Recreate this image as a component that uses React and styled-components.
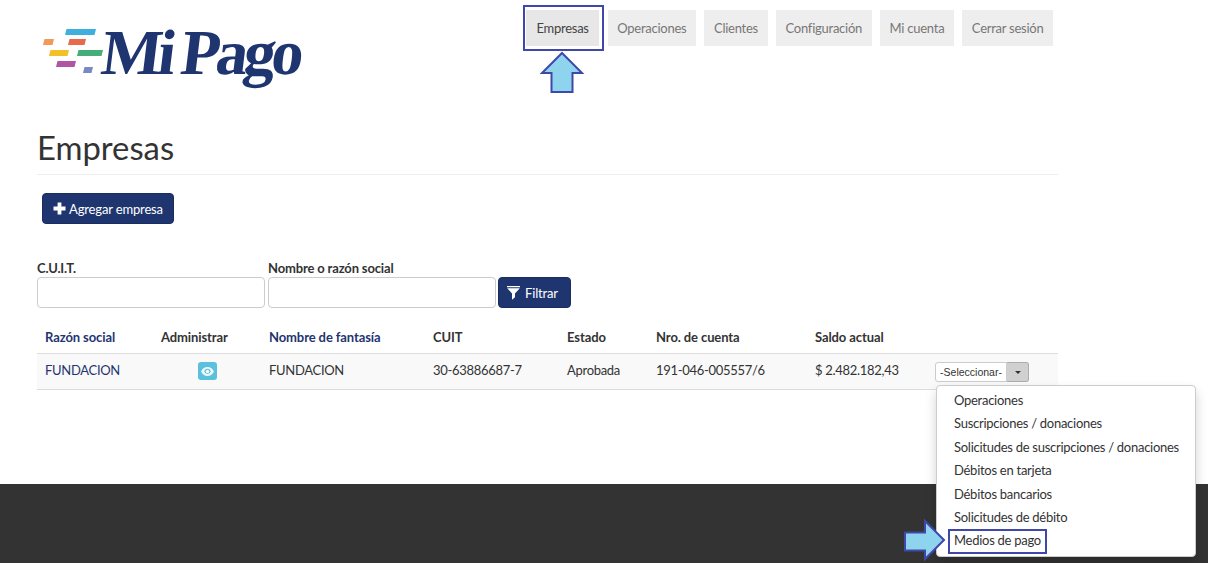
import React from "react";
import styled, { createGlobalStyle } from "styled-components";

const GlobalStyle = createGlobalStyle`
  html, body {
    margin: 0;
    padding: 0;
    background: #fff;
    overflow: hidden;
  }
  body {
    font-family: Lato, "Open Sans", sans-serif;
    font-size: 13px;
    color: #333;
  }
  * {
    box-sizing: border-box;
  }
`;

const Page = styled.div`
  position: relative;
  width: 1208px;
  height: 563px;
  overflow: hidden;
  display: flex;
  flex-direction: column;
`;

const Main = styled.div`
  height: 484px;
  padding: 0 150px 0 37px;
`;

const Header = styled.header`
  height: 105px;
  display: flex;
  justify-content: space-between;
  align-items: flex-start;
`;

const LogoWrap = styled.div`
  display: flex;
  align-items: flex-start;
  margin: 15px 0 0 5px;
  color: #1f3570;
`;

const LogoBars = styled.svg`
  width: 62px;
  height: 50px;
  margin-top: 12px;
  flex: none;
`;

const LogoText = styled.span`
  display: inline-block;
  font-family: "Liberation Serif", serif;
  font-weight: 700;
  font-size: 64px;
  line-height: 72px;
  letter-spacing: -4.2px;
  word-spacing: -2px;
  margin: 2px 0 0 -2px;
  white-space: nowrap;
  transform: skewX(-7deg);
`;

const Nav = styled.nav`
  display: flex;
  gap: 8.5px;
  margin: 10px 5px 0 0;
`;

const NavItem = styled.a`
  height: 36px;
  padding: 0 ${(p) => (p.$active ? "10.5px" : "9.5px")};
  display: flex;
  align-items: center;
  font-size: 13px;
  letter-spacing: -0.25px;
  background: ${(p) => (p.$active ? "#e7e7e7" : "#eeeeee")};
  color: ${(p) => (p.$active ? "#444" : "#777")};
`;

const Title = styled.h1`
  margin: 0;
  height: 70px;
  padding-top: 23px;
  font-size: 32.8px;
  line-height: 40px;
  font-weight: 400;
  color: #333;
  border-bottom: 1px solid #eee;
`;

const PrimaryButton = styled.button`
  height: 31px;
  display: inline-flex;
  align-items: center;
  gap: 3px;
  padding: 0 10px;
  background: #1f3570;
  color: #fff;
  border: 1px solid #1a2d60;
  border-radius: 4px;
  font: 13px Lato, sans-serif;
  letter-spacing: -0.15px;
`;

const FilterButton = styled(PrimaryButton)`
  gap: 5px;
  margin-left: -1px;
  padding: 0 12px 0 8px;
`;

const AddRow = styled.div`
  padding: 18px 0 0 5px;
  height: 91px;
`;

const FilterRow = styled.form`
  display: flex;
  align-items: flex-end;
  gap: 3px;
  margin: 0;
  height: 42px;
`;

const Field = styled.label`
  display: flex;
  flex-direction: column;
  width: 228px;
  font-weight: 700;
  font-size: 13px;
  line-height: 16px;
  letter-spacing: -0.15px;
  color: #333;
`;

const Input = styled.input`
  width: 100%;
  height: 31px;
  margin-top: 1px;
  background: #fff;
  border: 1px solid #ccc;
  border-radius: 4px;
`;

const Table = styled.table`
  width: 1021px;
  margin-top: 18px;
  border-collapse: collapse;
  table-layout: fixed;
  font-size: 13px;
`;

const Th = styled.th`
  height: 27px;
  padding: 0 8px 4px;
  text-align: left;
  font-weight: 700;
  letter-spacing: -0.1px;
  color: ${(p) => (p.$link ? "#1f3570" : "#333")};
  border-bottom: 1px solid #ddd;
`;

const Td = styled.td`
  height: 36px;
  padding: 0 8px 2px;
  text-align: ${(p) => (p.$center ? "center" : "left")};
  letter-spacing: -0.3px;
  color: ${(p) => (p.$link ? "#1f3570" : "#333")};
  background: #f9f9f9;
  border-bottom: 1px solid #ddd;
`;

const EyeButton = styled.span`
  display: inline-flex;
  align-items: center;
  justify-content: center;
  width: 19px;
  height: 18px;
  margin-top: 2px;
  background: #5bc0de;
  border-radius: 3px;
  vertical-align: middle;
`;

const SelectGroup = styled.div`
  display: flex;
  width: 94px;
  height: 20px;
  margin-top: 4px;
`;

const SelectLabel = styled.span`
  width: 72px;
  display: flex;
  align-items: center;
  justify-content: center;
  font: 10.5px "Liberation Sans", Arial, sans-serif;
  letter-spacing: 0;
  color: #333;
  background: #fff;
  border: 1px solid #ccc;
  border-radius: 3px 0 0 3px;
`;

const SelectCaret = styled.span`
  flex: 1;
  display: flex;
  align-items: center;
  justify-content: center;
  background: #d0d0d0;
  border: 1px solid #adadad;
  border-left: none;
  border-radius: 0 3px 3px 0;

  &::after {
    content: "";
    border-top: 3px solid #333;
    border-left: 3px solid transparent;
    border-right: 3px solid transparent;
  }
`;

const Footer = styled.footer`
  flex: 1;
  background: #333;
`;

const Menu = styled.ul`
  position: absolute;
  left: 936px;
  top: 385px;
  width: 260px;
  height: 172px;
  margin: 0;
  padding: 3px 0 0;
  list-style: none;
  background: #fff;
  border: 1px solid #ccc;
  border-radius: 4px;
  box-shadow: 0 6px 12px rgba(0, 0, 0, 0.175);
`;

const MenuItem = styled.li`
  height: 23.4px;
  padding-left: 17px;
  line-height: 23.4px;
  font-size: 13px;
  letter-spacing: -0.27px;
  color: #333;
  white-space: nowrap;
`;

const Callout = styled.div`
  position: absolute;
  left: ${(p) => p.$x}px;
  top: ${(p) => p.$y}px;
  width: ${(p) => p.$w}px;
  height: ${(p) => p.$h}px;
  border: 2px solid #3f48a8;
  pointer-events: none;
`;

const ArrowMark = styled.svg`
  position: absolute;
  left: ${(p) => p.$x}px;
  top: ${(p) => p.$y}px;
  overflow: visible;
`;

const columns = [116, 108, 164, 134, 89, 159, 120, 131];
const navItems = ["Empresas", "Operaciones", "Clientes", "Configuración", "Mi cuenta", "Cerrar sesión"];
const menuItems = [
  "Operaciones",
  "Suscripciones / donaciones",
  "Solicitudes de suscripciones / donaciones",
  "Débitos en tarjeta",
  "Débitos bancarios",
  "Solicitudes de débito",
  "Medios de pago",
];

const Bar = ({ x, y, w, h = 6, fill }) => (
  <polygon points={`${x + 1.5},${y} ${x + w},${y} ${x + w - 1.5},${y + h} ${x},${y + h}`} fill={fill} />
);

const Logo = () => (
  <LogoWrap>
    <LogoBars viewBox="42 27 62 50">
      <Bar x={65} y={29} w={31} fill="#3fb0dd" />
      <Bar x={43} y={39} w={11} fill="#f0995a" />
      <Bar x={68} y={39} w={18} fill="#e8694c" />
      <Bar x={49} y={50} w={20} fill="#f2c029" />
      <Bar x={77} y={50} w={26} fill="#45ad78" />
      <Bar x={56} y={61} w={20} fill="#ae55a5" />
      <Bar x={83} y={67} w={10} fill="#7b88c4" />
    </LogoBars>
    <LogoText>Mi Pago</LogoText>
  </LogoWrap>
);

const PlusIcon = () => (
  <svg width="13" height="13" viewBox="0 0 13 13">
    <path d="M4.6 0.5h3.8v4.1h4.1v3.8H8.4v4.1H4.6V8.400H0.500V4.600h4.100z" fill="#fff" />
  </svg>
);

const FilterIcon = () => (
  <svg width="13" height="14" viewBox="0 0 13 14">
    <path d="M0 0h13v1.200H0zM0.200 2.200h12.600L8 7.600v3.600L5 13.800V7.600z" fill="#fff" />
  </svg>
);

const EyeIcon = () => (
  <svg width="13" height="9" viewBox="0 0 13 9">
    <path
      fillRule="evenodd"
      d="M6.500 0C3.500 0 1.200 2 0 4.500 1.200 7 3.500 9 6.500 9S11.800 7 13 4.500C11.800 2 9.500 0 6.500 0zM6.500 1.700a3.300 3.300 0 0 1 3.200 2.800 3.300 3.300 0 0 1-6.400 0 3.300 3.300 0 0 1 3.200-2.800z"
      fill="#fff"
      opacity="0.9"
    />
    <circle cx="6.500" cy="4.500" r="1.700" fill="#fff" />
  </svg>
);

const App = () => (
  <Page>
    <GlobalStyle />
    <Main>
      <Header>
        <Logo />
        <Nav>
          {navItems.map((item, index) => (
            <NavItem key={item} $active={index === 0}>
              {item}
            </NavItem>
          ))}
        </Nav>
      </Header>
      <Title>Empresas</Title>
      <AddRow>
        <PrimaryButton type="button">
          <PlusIcon />
          Agregar empresa
        </PrimaryButton>
      </AddRow>
      <FilterRow>
        <Field>
          C.U.I.T.
          <Input />
        </Field>
        <Field>
          Nombre o razón social
          <Input />
        </Field>
        <FilterButton type="button">
          <FilterIcon />
          Filtrar
        </FilterButton>
      </FilterRow>
      <Table>
        <colgroup>
          {columns.map((width, index) => (
            <col key={index} width={width} />
          ))}
        </colgroup>
        <thead>
          <tr>
            <Th $link>Razón social</Th>
            <Th>Administrar</Th>
            <Th $link>Nombre de fantasía</Th>
            <Th>CUIT</Th>
            <Th>Estado</Th>
            <Th>Nro. de cuenta</Th>
            <Th>Saldo actual</Th>
            <Th />
          </tr>
        </thead>
        <tbody>
          <tr>
            <Td $link>FUNDACION</Td>
            <Td $center>
              <EyeButton>
                <EyeIcon />
              </EyeButton>
            </Td>
            <Td>FUNDACION</Td>
            <Td>30-63886687-7</Td>
            <Td>Aprobada</Td>
            <Td>191-046-005557/6</Td>
            <Td>$ 2.482.182,43</Td>
            <Td>
              <SelectGroup>
                <SelectLabel>-Seleccionar-</SelectLabel>
                <SelectCaret />
              </SelectGroup>
            </Td>
          </tr>
        </tbody>
      </Table>
    </Main>
    <Footer />
    <Menu>
      {menuItems.map((item) => (
        <MenuItem key={item}>{item}</MenuItem>
      ))}
    </Menu>
    <Callout $x={523} $y={5} $w={81} $h={46} />
    <Callout $x={948} $y={529} $w={99} $h={25} />
    <ArrowMark $x={541} $y={52} width="42" height="41" viewBox="0 0 42 41">
      <path d="M21 1L41 21H31.500V40H10.500V21H1z" fill="#8fd4ee" stroke="#3f48a8" strokeWidth="2" />
    </ArrowMark>
    <ArrowMark $x={904} $y={520} width="41" height="40" viewBox="0 0 41 40">
      <path d="M40 20L21 39V30.500H1V12.500H21V1z" fill="#8fd4ee" stroke="#3f48a8" strokeWidth="2" />
    </ArrowMark>
  </Page>
);

export default App;
